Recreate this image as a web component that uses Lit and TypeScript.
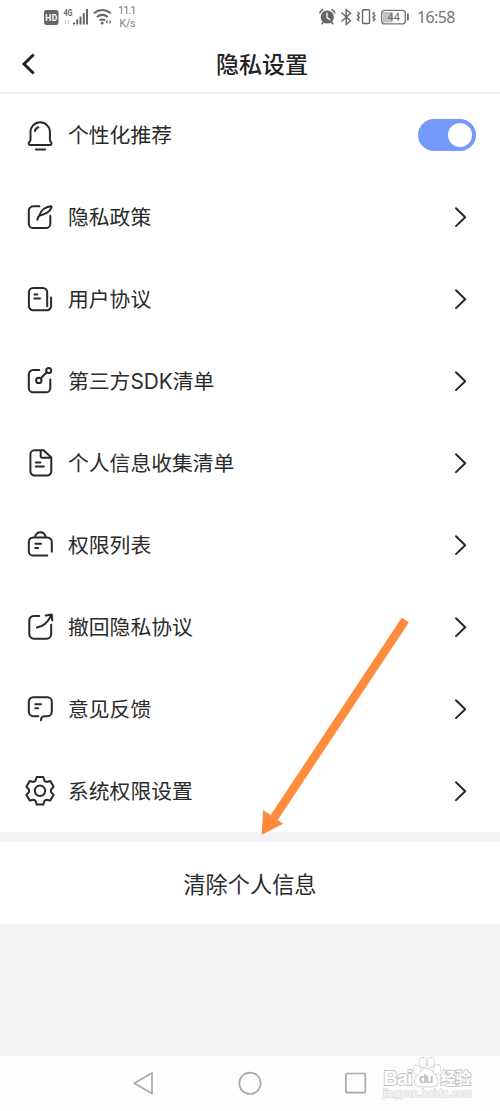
import { LitElement, html, svg, css } from "lit";
import { customElement } from "lit/decorators.js";

const rad = Math.PI / 180;

/* Six-toothed gear outline centred in the 32px icon box. */
const gear = (() => {
  const tooth = [[-4.5, -10], [-3.3, -13.8], [3.3, -13.8], [4.5, -10]];
  const points: string[] = [];
  for (let i = 0; i < 6; i++) {
    const c = Math.cos(i * 60 * rad);
    const s = Math.sin(i * 60 * rad);
    for (const [x, y] of tooth) {
      points.push(`${(16 + x * c - y * s).toFixed(2)} ${(15.8 + x * s + y * c).toFixed(2)}`);
    }
  }
  return `M${points.join("L")}Z`;
})();

const rows = [
  {
    label: "个性化推荐",
    toggle: true,
    icon: svg`<path d="M6.500 20.500V13a9.700 9.700 0 0 1 19.400 0v7.500q0 1.500 1.500 3.300v.9q0 1.200-1.200 1.200H6q-1.200 0-1.200-1.200v-.9q1.700-1.800 1.700-3.300zM11.800 30.400h9.400M10.900 12q.5-2.800 3.500-3.800"/>`,
  },
  {
    label: "隐私政策",
    icon: svg`<path d="M15.500 5.300H9.200a4.400 4.400 0 0 0-4.400 4.400v13a4.400 4.400 0 0 0 4.400 4.400h12.700a4.400 4.400 0 0 0 4.400-4.400v-7.900M13.300 18.800q.8-3 2.400-4.800M15.800 14.400q.4-4 4.700-6.900 3-2 6.200-2.300 1.200 0 .8 1.200-1 3.200-4.400 5.200-3.400 2-7.300 2.800"/>`,
  },
  {
    label: "用户协议",
    icon: svg`<path d="M23.200 23.300V9.300a4.300 4.300 0 0 0-4.300-4.300H9.200a4.300 4.300 0 0 0-4.300 4.300v13.600a4.300 4.300 0 0 0 4.300 4.300h13.700a4.200 4.200 0 0 0 4.200-4.200v-8.500M10.400 11.400h3M10.400 15.500h5.600"/>`,
  },
  {
    label: "第三方SDK清单",
    icon: svg`<path d="M15.300 5H9.200a4.400 4.400 0 0 0-4.400 4.400v13.500a4.400 4.400 0 0 0 4.400 4.400h12.700a4.400 4.400 0 0 0 4.400-4.400v-8.400M16.800 13.300l6-6"/><circle cx="14.800" cy="15.400" r="2.700"/><circle cx="24.700" cy="5.400" r="2.500"/>`,
  },
  {
    label: "个人信息收集清单",
    icon: svg`<path d="M19.600 3.300h-9a4.200 4.200 0 0 0-4.200 4.200v16.800a4.200 4.200 0 0 0 4.200 4.200h12.500a4.200 4.200 0 0 0 4.200-4.200V10.600zM16.700 3.500v5.600q0 1.600 1.600 1.600h8.800M11.800 15.400h4.700M11.800 19.500h8"/>`,
  },
  {
    label: "权限列表",
    icon: svg`<path d="M23.300 26.600H9.200a4.400 4.400 0 0 1-4.400-4.400v-9.400a4.400 4.400 0 0 1 4.400-4.400h14.200a4.400 4.400 0 0 1 4.400 4.400v10M11 8.200q1-5 5.300-5t5.500 5M11.400 14.700h5.600M11.400 19h2.700"/>`,
  },
  {
    label: "撤回隐私协议",
    icon: svg`<path d="M15.300 4.900H9.700a4.400 4.400 0 0 0-4.400 4.400v14a4.400 4.400 0 0 0 4.400 4.400h13.100a4.400 4.400 0 0 0 4.400-4.400V13.700M13 16.600q9-1.500 14-12M21.700 4.600l6-1 .6 5.700"/>`,
  },
  {
    label: "意见反馈",
    icon: svg`<path d="M14.300 23.200H9.200a4.400 4.400 0 0 1-4.400-4.400V8.600a4.400 4.400 0 0 1 4.400-4.400h14.200a4.400 4.400 0 0 1 4.400 4.400v10.200a4.400 4.400 0 0 1-4.400 4.400h-3.300q-3 .3-3.200 4M11.400 11.300h5.600M11.400 15.200h2.700"/>`,
  },
  {
    label: "系统权限设置",
    icon: svg`<path d=${gear}/><circle cx="16" cy="15.800" r="5.200"/>`,
  },
];

@customElement("app-root")
export class AppRoot extends LitElement {
  static styles = css`
    :host {
      display: flex;
      flex-direction: column;
      position: relative;
      height: 1111px;
      overflow: hidden;
      background: #f1f3f5;
      color: #2b2b2b;
      font-family: Roboto, "Noto Sans CJK SC", sans-serif;
    }
    svg { display: block; flex: none; }
    .status {
      display: flex;
      justify-content: space-between;
      height: 34px;
      background: #fff;
    }
    .header {
      display: grid;
      grid-template-columns: 60px 1fr 60px;
      align-items: center;
      box-sizing: border-box;
      height: 60px;
      background: #fff;
      border-bottom: 2px solid #f2f2f2;
    }
    .title {
      margin: 0;
      padding-left: 24px;
      text-align: center;
      font: 500 23px/34px "Noto Sans CJK SC", sans-serif;
      color: #222;
    }
    .list { background: #fff; }
    .row {
      display: flex;
      align-items: center;
      box-sizing: border-box;
      height: 82px;
      padding: 0 24px;
    }
    .line {
      fill: none;
      stroke: #292929;
      stroke-width: 2;
      stroke-linecap: round;
      stroke-linejoin: round;
    }
    .label {
      flex: 1;
      margin-left: 12px;
      padding-top: 2px;
      font: 400 20.8px/30px Inter, "Noto Sans CJK SC", sans-serif;
    }
    .switch {
      display: flex;
      justify-content: flex-end;
      box-sizing: border-box;
      width: 58px;
      height: 32px;
      padding: 4px;
      border-radius: 16px;
      background: #7599fb;
    }
    .knob { width: 24px; height: 24px; border-radius: 50%; background: #fff; }
    .clear {
      display: flex;
      align-items: center;
      justify-content: center;
      height: 82px;
      margin-top: 10px;
      padding-bottom: 1px;
      box-sizing: border-box;
      background: #fff;
      font: 400 22.2px/32px "Noto Sans CJK SC", sans-serif;
    }
    .nav {
      display: flex;
      justify-content: center;
      align-items: center;
      gap: 82px;
      box-sizing: border-box;
      height: 55px;
      margin-top: auto;
      padding-bottom: 1px;
      background: #fdfdfd;
    }
    .key { fill: none; stroke: #a9a9a9; stroke-width: 1.7; stroke-linejoin: round; }
    .arrow { position: absolute; left: 250px; top: 610px; }
    .mark { position: absolute; left: 378px; top: 1050px; }
    .cjk { font-family: "Noto Sans CJK SC", sans-serif; }
  `;

  render() {
    return html`
      <div class="status">
        <svg width="150" height="34" fill="#666" font-family="Roboto, sans-serif">
          <rect x="44" y="10" width="14.500" height="15" rx="2.500"/>
          <text x="45.300" y="21" font-size="8.500" font-weight="700" fill="#fff" textLength="12">HD</text>
          <text x="63.500" y="15.500" font-size="8.500" font-weight="700" textLength="9" lengthAdjust="spacingAndGlyphs">4G</text>
          <path d="M65.500 24v-4M68.500 20v4" stroke="#ccc" stroke-width="1.200"/>
          <path d="M73 22.500h2v2h-2zM76.200 19.500h2v5h-2zM79.500 16.500h2v8h-2zM82.800 13h2v11.500h-2zM86 9h2v15.500h-2z"/>
          <g fill="none" stroke="#666" stroke-width="2"><path d="M93.800 13.200q8.500-6.400 17 0M96.800 17q5.500-4.300 11 0M99.500 20.400q2.800-2 5.600 0"/></g>
          <circle cx="102.200" cy="23" r="1.500"/>
          <path d="M105.500 22l2-2v4zM111.500 22l-2-2v4z"/>
          <text x="118" y="14.300" font-size="11" fill="#808080" textLength="18.500">11.1</text>
          <text x="119.500" y="27" font-size="10.500" fill="#808080" textLength="16">K/s</text>
        </svg>
        <svg width="184" height="34" viewBox="316 0 184 34" fill="#666" font-family="Roboto, sans-serif">
          <circle cx="327.300" cy="17" r="6.600"/>
          <path d="M319.800 13.500q.4-3 3.500-4M334.900 13.500q-.4-3-3.500-4M323.500 22l-2 2.300M331.200 22l2 2.300" fill="none" stroke="#666" stroke-width="1.500"/>
          <path d="M327 12.800v4.800l3.300 2.500" fill="none" stroke="#fff" stroke-width="1.300"/>
          <path d="M341.500 12.500l9 8.300-4.300 3.700V9.500l4.300 3.700-9 8.300" fill="none" stroke="#666" stroke-width="1.400"/>
          <rect x="362.500" y="9.800" width="7" height="13.700" rx="1" fill="none" stroke="#666" stroke-width="1.400"/>
          <path d="M357.500 12l1.800 1.500-1.800 2 1.800 2-1.800 2 1.800 1.500M374.800 12l-1.800 1.500 1.800 2-1.800 2 1.800 2-1.800 1.500" fill="none" stroke="#666" stroke-width="1.400"/>
          <rect x="383" y="12" width="9.500" height="10.500" fill="#c2c2c2"/>
          <rect x="381.700" y="10.400" width="23.600" height="13.500" rx="3" fill="none" stroke="#777" stroke-width="1.400"/>
          <path d="M407 13.500h1.800v7H407z"/>
          <text x="387.500" y="21.300" font-size="11" textLength="12.500">44</text>
          <text x="417" y="23" font-size="16" fill="#747474" textLength="38.500" font-family="Noto Sans, sans-serif">16:58</text>
        </svg>
      </div>

      <div class="header">
        <svg width="60" height="58"><path d="M33.700 20.500L24 30l9.700 9.500" fill="none" stroke="#222" stroke-width="3"/></svg>
        <h1 class="title">隐私设置</h1>
      </div>

      <div class="list">
        ${rows.map(
          (row) => html`
            <div class="row">
              <svg class="line" width="32" height="32">${row.icon}</svg>
              <span class="label">${row.label}</span>
              ${row.toggle
                ? html`<div class="switch"><div class="knob"></div></div>`
                : html`<svg class="line" width="24" height="24"><path d="M4 3.300l9.200 9-9.200 8.800" stroke-width="2"/></svg>`}
            </div>
          `
        )}
      </div>

      <div class="clear">清除个人信息</div>

      <div class="nav">
        <svg class="key" width="24" height="24"><path d="M2.200 12.200L20 1.900v20.500z"/></svg>
        <svg class="key" width="24" height="24"><circle cx="12" cy="12.300" r="10.700"/></svg>
        <svg class="key" width="24" height="24"><rect x="1.900" y="2.500" width="19.400" height="19.200" rx="1"/></svg>
      </div>

      <svg class="arrow" width="170" height="230" viewBox="250 610 170 230">
        <path d="M401.700 617.700L409 622.300 277.700 820l5.600 3.700-21.600 11L263 810l7.700 5z" fill="#ff8c3c"/>
      </svg>

      <svg class="mark" width="110" height="56" viewBox="378 1050 110 56" font-family="Liberation Sans, sans-serif" font-weight="700" fill="#fff" stroke="#c6c6c6" stroke-width="1.800" paint-order="stroke">
        <text x="383.500" y="1085" font-size="20" textLength="29">Bai</text>
        <g fill="#fff" stroke-width="1.300">
          <ellipse cx="417" cy="1070" rx="3.300" ry="4.600" transform="rotate(-20 417 1070)"/>
          <ellipse cx="423" cy="1062.500" rx="3.500" ry="4.800"/>
          <ellipse cx="431" cy="1062.500" rx="3.500" ry="4.800"/>
          <ellipse cx="437" cy="1069.500" rx="3.300" ry="4.600" transform="rotate(20 437 1069.500)"/>
          <path d="M426.500 1068.500c4.500 0 6 4 9 7s3.500 10.500-3 11h-12c-7-.5-7-7.500-3.500-10.500s5-7.500 9.500-7.500z"/>
        </g>
        <text x="419" y="1083.300" font-size="13" textLength="14.500" fill="#bdbdbd" stroke="none">du</text>
        <text class="cjk" x="440.500" y="1084" font-size="15.500" textLength="30.500">经验</text>
        <text x="383" y="1097" font-size="10.500" font-weight="400" textLength="89" stroke="#d8d8d8" stroke-width="1.300">jingyan.baidu.com</text>
      </svg>
    `;
  }
}
